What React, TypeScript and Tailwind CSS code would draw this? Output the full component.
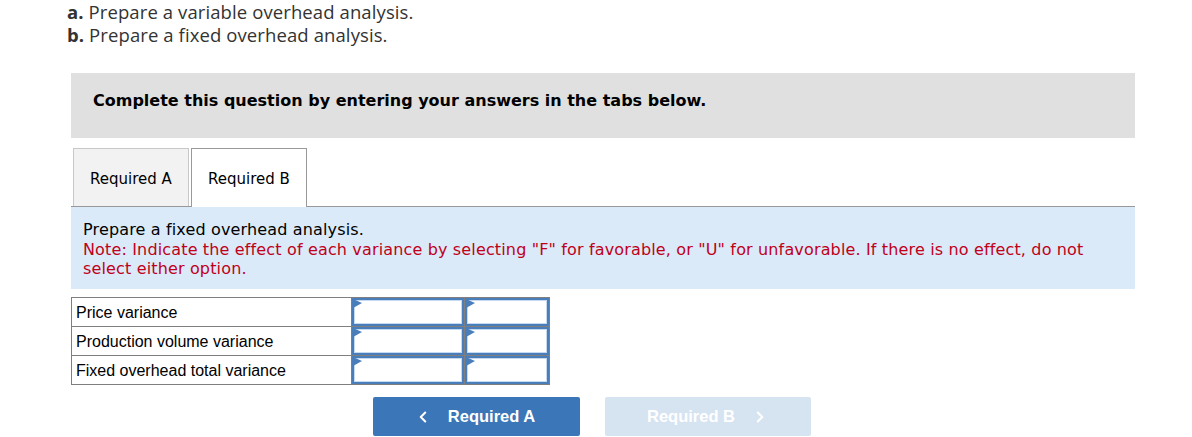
import { ChevronLeft, ChevronRight } from 'lucide-react'

const ROWS = ['Price variance', 'Production volume variance', 'Fixed overhead total variance']

function AnswerCell({ w }: { w: string }) {
  return (
    <td className={`border border-[#7f7f7f] p-0 ${w}`}>
      <div className="relative h-[28px] border-2 border-[#4a7ebb] bg-white">
        <div className="absolute inset-0 border border-[#c5d9f1]" />
        <svg className="absolute -left-[1px] -top-[1px]" width="9" height="9" viewBox="0 0 9 9">
          <polygon points="0,0 9,4 0,9" fill="#4a7ebb" />
        </svg>
      </div>
    </td>
  )
}

export default function App() {
  return (
    <div className="w-[1192px] h-[437px] bg-white overflow-hidden">
      {/* Consignes */}
      <div className="pl-[67px] pt-[0px] text-[18.5px] leading-[23px] tracking-[0.1px] text-[#333] font-['Open_Sans',sans-serif]">
        <p><b>a.</b> Prepare a variable overhead analysis.</p>
        <p><b>b.</b> Prepare a fixed overhead analysis.</p>
      </div>

      <div className="ml-[71px] w-[1064px] mt-[27px] font-['DejaVu_Sans',sans-serif]">
        {/* Bandeau */}
        <div className="h-[65px] bg-[#e0e0e0] pl-[22px] pt-[16px]">
          <span className="text-[16px] leading-[20px] font-bold text-black">
            Complete this question by entering your answers in the tabs below.
          </span>
        </div>

        {/* Onglets */}
        <div className="mt-[10px] flex items-end border-b border-[#999] h-[59px]">
          <div className="ml-[2px] w-[116px] h-[58px] pt-[3px] bg-[#f2f2f2] border border-b-0 border-[#c8c8c8] flex items-center justify-center text-[15px] text-black">
            Required A
          </div>
          <div className="ml-[2px] w-[116px] h-[59px] pt-[3px] -mb-[1px] bg-white border border-b-0 border-[#999] flex items-center justify-center text-[15px] text-black">
            Required B
          </div>
        </div>

        {/* Panneau */}
        <div className="bg-[#daeaf8] h-[82px] pl-[12px] pr-[40px] pt-[13px] text-[16px] leading-[19.5px] tracking-[0.15px]">
          <p className="text-black">Prepare a fixed overhead analysis.</p>
          <p className="text-[#c0001a]">
            Note: Indicate the effect of each variance by selecting "F" for favorable, or "U" for unfavorable. If there is no effect, do not select either option.
          </p>
        </div>

        {/* Tableau */}
        <table className="mt-[8px] border-collapse font-['Liberation_Sans',sans-serif] text-[16px] text-black">
          <tbody>
            {ROWS.map((r) => (
              <tr key={r} className="h-[29px]">
                <td className="border border-[#7f7f7f] w-[280px] pl-[4px] py-0 leading-[27px]">{r}</td>
                <AnswerCell w="w-[113px]" />
                <AnswerCell w="w-[85px]" />
              </tr>
            ))}
          </tbody>
        </table>

        {/* Navigation */}
        <div className="mt-[12px] ml-[302px] flex gap-[25px] font-['Liberation_Sans',sans-serif]">
          <button className="w-[207px] h-[39px] bg-[#3a76b8] rounded-[2px] text-white text-[16.5px] font-bold flex items-center justify-center gap-[16px] pr-[4px]">
            <ChevronLeft size={18} strokeWidth={2.75} />
            <span>Required A</span>
          </button>
          <button className="w-[206px] h-[39px] bg-[#d6e3f1] rounded-[2px] text-white text-[16.5px] font-bold flex items-center justify-center gap-[16px]">
            <span>Required B</span>
            <ChevronRight size={18} strokeWidth={2.75} />
          </button>
        </div>
      </div>
    </div>
  )
}
